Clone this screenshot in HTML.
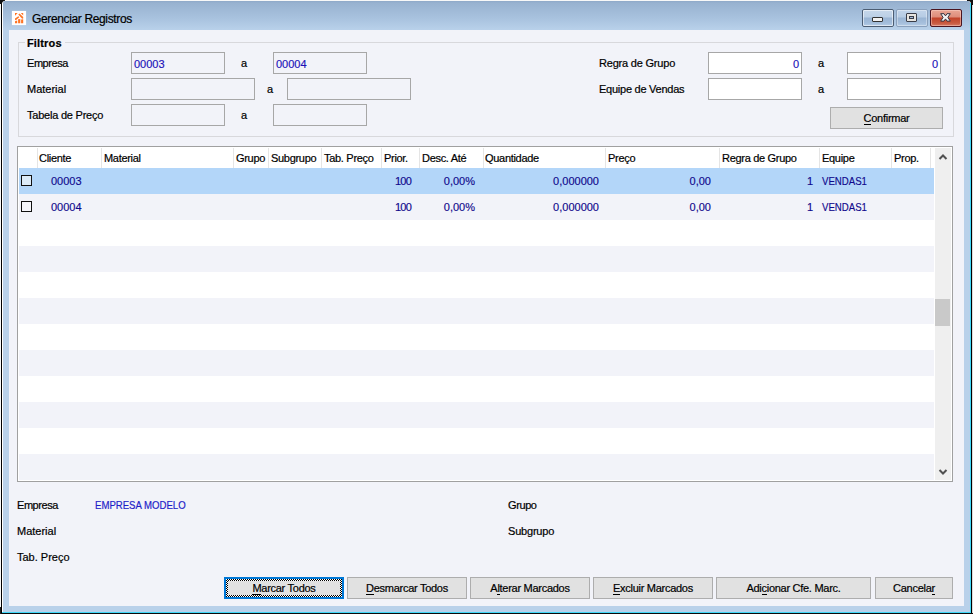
<!DOCTYPE html>
<html><head><meta charset="utf-8">
<style>
*{margin:0;padding:0;box-sizing:border-box}
html,body{width:973px;height:614px;overflow:hidden;background:#dfe6ee}
body{position:relative;font-family:"Liberation Sans",sans-serif;font-size:11px;color:#000;-webkit-text-stroke:0.2px currentColor}
.a{position:absolute}
.t{position:absolute;white-space:nowrap;line-height:13px;height:13px}
.frame{left:1px;top:0;width:971px;height:614px;background:#000;border-radius:6px 6px 0 0}
.frame2{left:2px;top:0;width:969px;height:613px;background:#fff;border-radius:5px 5px 0 0}
.frame3{left:3px;top:1px;width:967px;height:611px;background:linear-gradient(#8fa9c8 0px,#98b2d0 2px,#a9c3df 18px,#b9d1ea 29px,#b9d1ea 100%);border-radius:2px 2px 0 0}
.client{left:9px;top:30px;width:955px;height:576px;background:#f2f3f9}
.inp{position:absolute;border:1px solid #a7a7a7;background:#f2f3f9;height:22px}
.inpw{background:#fff}
.btn{position:absolute;border:1px solid #adadad;background:#e1e1e1;height:22px;text-align:center;line-height:21px;letter-spacing:-0.28px}
.blue{color:#10088c;-webkit-text-stroke:0.15px #10088c}
.blue2{color:#2010b8;-webkit-text-stroke:0.15px #2010b8}
u{text-decoration:none;border-bottom:1px solid #000}
</style></head><body>
<div class="a" style="left:0;top:0;width:973px;height:614px;background:#f8f8f8"></div>
<div class="a" style="left:972px;top:0;width:1px;height:614px;background:#dcdcdc"></div>
<div class="a" style="left:1px;top:0;width:1px;height:614px;background:#000"></div>
<div class="a" style="left:971px;top:0;width:1px;height:614px;background:#000"></div>
<div class="a" style="left:0;top:613px;width:973px;height:1px;background:#0a0a0a"></div>
<div class="a" style="left:0;top:607px;width:1px;height:7px;background:#222"></div>
<div class="a" style="left:0;top:0;width:5px;height:4px;background:#111;border-radius:0 0 4px 0"></div>
<div class="a" style="left:967px;top:0;width:6px;height:5px;background:#111;border-radius:0 0 0 4px"></div>
<div class="a" style="left:2px;top:1px;width:969px;height:612px;background:#fff;border-radius:3px 3px 0 0"></div>
<div class="a" style="left:970px;top:3px;width:1px;height:610px;background:#40d8f8"></div>
<div class="a" style="left:2px;top:612px;width:969px;height:1px;background:#40d8f8"></div>
<div class="a frame3"></div>
<!-- title icon -->
<div class="a" style="left:12px;top:11px;width:14px;height:14px;background:#fff;box-shadow:0 0 1px rgba(255,255,255,.6)"></div>
<svg class="a" style="left:12px;top:10px" width="14" height="16" viewBox="12 10 14 16">
<g fill="#ff7424">
<path d="M15 13H17.6L15 15.8Z"/>
<path d="M20.8 13H23.2V15.6Z"/>
<path d="M18.3 14.6L19.5 13.6L23.2 16.9V18.6L22.2 18.8Z"/>
<path d="M18.4 16.2L19.3 17.3L15.8 20.2L15 19.8V18.6Z"/>
<path d="M15 21.2L17.2 20.6V23.2H15Z"/>
<path d="M18.1 19.3L20.3 19V23.2H18.1Z"/>
<path d="M21.1 19.4L23.2 19.2V23.2H21.1Z"/>
</g></svg>
<div class="t" style="left:32px;top:12px;font-size:12px;line-height:14px;color:#000;letter-spacing:-0.36px">Gerenciar Registros</div>

<!-- caption buttons -->
<div class="a" style="left:862px;top:9px;width:32px;height:18px;border:1px solid #4c5d73;border-radius:2px;background:linear-gradient(#c6d7ea 0,#bcd0e6 7px,#9ab5d4 8px,#a3bddb 13px,#bcd2ea 17px)"></div>
<div class="a" style="left:863px;top:10px;width:30px;height:16px;border:1px solid rgba(255,255,255,.55);border-radius:1px"></div>
<div class="a" style="left:872px;top:17px;width:11px;height:5px;border:1px solid #333;border-radius:1px;background:#f2f2f2"></div>
<div class="a" style="left:896px;top:9px;width:32px;height:18px;border:1px solid #8aa0bc;border-radius:2px;background:linear-gradient(#c1d4ea 0,#b7cce4 7px,#9ab5d4 8px,#a6bfdc 13px,#b9d0e9 17px)"></div>
<div class="a" style="left:897px;top:10px;width:30px;height:16px;border:1px solid rgba(255,255,255,.35);border-radius:1px"></div>
<div class="a" style="left:906px;top:13px;width:11px;height:9px;border:1px solid #3a3d48;border-radius:1px;background:#e6e4e0"></div>
<div class="a" style="left:909px;top:16px;width:5px;height:3px;border:1px solid #3a3d48;background:#a3bcd9"></div>
<div class="a" style="left:930px;top:9px;width:32px;height:18px;border:1px solid #4a1520;border-radius:2px;background:linear-gradient(#e9a695 0,#de8d7b 7px,#c2432a 8px,#c85a40 13px,#d98370 17px)"></div>
<div class="a" style="left:931px;top:10px;width:30px;height:16px;border:1px solid rgba(255,220,210,.45);border-radius:2px"></div>
<svg class="a" style="left:938px;top:11px" width="15" height="13" viewBox="0 0 15 13">
<polygon points="2.7,2.7 6.0,2.7 7.5,4.9 9.0,2.7 12.3,2.7 9.9,6.4 12.3,10.1 9.0,10.1 7.5,7.9 6.0,10.1 2.7,10.1 5.1,6.4" fill="#f2f2f2" stroke="#363440" stroke-width="1" stroke-linejoin="round"/>
</svg>

<div class="a client"></div>

<!-- group box -->
<div class="a" style="left:18px;top:42px;width:936px;height:95px;border:1px solid #d8d8dc"></div>
<div class="a" style="left:25px;top:38px;width:40px;height:9px;background:#f2f3f9"></div>
<div class="t" style="left:27px;top:37px;font-weight:bold;letter-spacing:0.15px">Filtros</div>

<div class="t" style="left:27px;top:57px;letter-spacing:-0.45px">Empresa</div>
<div class="t" style="left:27px;top:83px">Material</div>
<div class="t" style="left:27px;top:109px;letter-spacing:-0.22px">Tabela de Preço</div>

<div class="inp" style="left:131px;top:52px;width:94px"></div>
<div class="t blue2" style="left:134px;top:58px">00003</div>
<div class="t" style="left:241px;top:57px">a</div>
<div class="inp" style="left:273px;top:52px;width:94px"></div>
<div class="t blue2" style="left:276px;top:58px">00004</div>

<div class="inp" style="left:131px;top:78px;width:124px"></div>
<div class="t" style="left:267px;top:83px">a</div>
<div class="inp" style="left:287px;top:78px;width:124px"></div>

<div class="inp" style="left:131px;top:104px;width:94px"></div>
<div class="t" style="left:241px;top:109px">a</div>
<div class="inp" style="left:273px;top:104px;width:94px"></div>

<div class="t" style="left:599px;top:57px;letter-spacing:-0.2px">Regra de Grupo</div>
<div class="t" style="left:599px;top:83px;letter-spacing:-0.25px">Equipe de Vendas</div>
<div class="inp inpw" style="left:708px;top:52px;width:94px"></div>
<div class="t blue2" style="left:759px;top:58px;width:40px;text-align:right">0</div>
<div class="t" style="left:818px;top:57px">a</div>
<div class="inp inpw" style="left:847px;top:52px;width:94px"></div>
<div class="t blue2" style="left:898px;top:58px;width:40px;text-align:right">0</div>
<div class="inp inpw" style="left:708px;top:78px;width:94px"></div>
<div class="t" style="left:818px;top:83px">a</div>
<div class="inp inpw" style="left:847px;top:78px;width:94px"></div>

<div class="btn" style="left:830px;top:107px;width:113px;line-height:19px"><span style="position:relative;top:1px"><u>C</u>onfirmar</span></div>

<!-- grid -->
<div class="a" id="grid" style="left:17px;top:146px;width:936px;height:336px;border:1px solid #a0a0a0;background:#fff;overflow:hidden">
<div class="a" style="left:19px;top:1px;width:1px;height:20px;background:#e5e5e5"></div>
<div class="a" style="left:83px;top:1px;width:1px;height:20px;background:#e5e5e5"></div>
<div class="a" style="left:215px;top:1px;width:1px;height:20px;background:#e5e5e5"></div>
<div class="a" style="left:250px;top:1px;width:1px;height:20px;background:#e5e5e5"></div>
<div class="a" style="left:303px;top:1px;width:1px;height:20px;background:#e5e5e5"></div>
<div class="a" style="left:363px;top:1px;width:1px;height:20px;background:#e5e5e5"></div>
<div class="a" style="left:401px;top:1px;width:1px;height:20px;background:#e5e5e5"></div>
<div class="a" style="left:465px;top:1px;width:1px;height:20px;background:#e5e5e5"></div>
<div class="a" style="left:587px;top:1px;width:1px;height:20px;background:#e5e5e5"></div>
<div class="a" style="left:701px;top:1px;width:1px;height:20px;background:#e5e5e5"></div>
<div class="a" style="left:801px;top:1px;width:1px;height:20px;background:#e5e5e5"></div>
<div class="a" style="left:873px;top:1px;width:1px;height:20px;background:#e5e5e5"></div>
<div class="a" style="left:912px;top:1px;width:1px;height:20px;background:#e5e5e5"></div>
<div class="t" style="left:21px;top:5px;letter-spacing:-0.3px">Cliente</div>
<div class="t" style="left:86px;top:5px;letter-spacing:-0.3px">Material</div>
<div class="t" style="left:218px;top:5px;letter-spacing:-0.3px">Grupo</div>
<div class="t" style="left:253px;top:5px;letter-spacing:-0.3px">Subgrupo</div>
<div class="t" style="left:306px;top:5px;letter-spacing:-0.3px">Tab. Preço</div>
<div class="t" style="left:366px;top:5px;letter-spacing:-0.3px">Prior.</div>
<div class="t" style="left:404px;top:5px;letter-spacing:-0.3px">Desc. Até</div>
<div class="t" style="left:467px;top:5px;letter-spacing:-0.3px">Quantidade</div>
<div class="t" style="left:590px;top:5px;letter-spacing:-0.3px">Preço</div>
<div class="t" style="left:704px;top:5px;letter-spacing:-0.3px">Regra de Grupo</div>
<div class="t" style="left:804px;top:5px;letter-spacing:-0.3px">Equipe</div>
<div class="t" style="left:876px;top:5px;letter-spacing:-0.3px">Prop.</div>
<div class="a" style="left:1px;top:21px;width:915px;height:26px;background:#b3d6f9"></div>
<div class="a" style="left:1px;top:47px;width:915px;height:26px;background:#f2f3f9"></div>
<div class="a" style="left:1px;top:99px;width:915px;height:26px;background:#f2f3f9"></div>
<div class="a" style="left:1px;top:151px;width:915px;height:26px;background:#f2f3f9"></div>
<div class="a" style="left:1px;top:203px;width:915px;height:26px;background:#f2f3f9"></div>
<div class="a" style="left:1px;top:255px;width:915px;height:26px;background:#f2f3f9"></div>
<div class="a" style="left:1px;top:307px;width:915px;height:26px;background:#f2f3f9"></div>
<div class="a" style="left:3px;top:28px;width:11px;height:11px;border:1px solid #111;background:#dcebf8"></div>
<div class="t blue" style="left:33px;top:28px">00003</div>
<div class="t blue" style="left:293px;top:28px;width:100px;text-align:right;letter-spacing:-0.8px">100</div>
<div class="t blue" style="left:357px;top:28px;width:100px;text-align:right">0,00%</div>
<div class="t blue" style="left:481px;top:28px;width:100px;text-align:right">0,000000</div>
<div class="t blue" style="left:593px;top:28px;width:100px;text-align:right">0,00</div>
<div class="t blue" style="left:695px;top:28px;width:100px;text-align:right">1</div>
<div class="t blue" style="left:804px;top:28px;transform:scaleX(0.875);transform-origin:0 0">VENDAS1</div>
<div class="a" style="left:3px;top:54px;width:11px;height:11px;border:1px solid #111;background:#f6f6fb"></div>
<div class="t blue" style="left:33px;top:54px">00004</div>
<div class="t blue" style="left:293px;top:54px;width:100px;text-align:right;letter-spacing:-0.8px">100</div>
<div class="t blue" style="left:357px;top:54px;width:100px;text-align:right">0,00%</div>
<div class="t blue" style="left:481px;top:54px;width:100px;text-align:right">0,000000</div>
<div class="t blue" style="left:593px;top:54px;width:100px;text-align:right">0,00</div>
<div class="t blue" style="left:695px;top:54px;width:100px;text-align:right">1</div>
<div class="t blue" style="left:804px;top:54px;transform:scaleX(0.875);transform-origin:0 0">VENDAS1</div>
<div class="a" style="left:917px;top:1px;width:16px;height:332px;background:#efefef"></div>
<div class="a" style="left:917px;top:152px;width:15px;height:27px;background:#c9c9c9"></div>
<svg class="a" style="left:920px;top:6px" width="10" height="8" viewBox="0 0 10 8"><path d="M1.5 6L5 2.5L8.5 6" fill="none" stroke="#505050" stroke-width="2"/></svg>
<svg class="a" style="left:920px;top:321px" width="10" height="8" viewBox="0 0 10 8"><path d="M1.5 2L5 5.5L8.5 2" fill="none" stroke="#505050" stroke-width="2"/></svg>
</div>

<!-- bottom labels -->
<div class="t" style="left:17px;top:499px;letter-spacing:-0.45px">Empresa</div>
<div class="t" style="left:95px;top:499px;color:#1e1ec8;-webkit-text-stroke:0.2px #1e1ec8;transform:scaleX(0.872);transform-origin:0 0">EMPRESA MODELO</div>
<div class="t" style="left:17px;top:525px">Material</div>
<div class="t" style="left:17px;top:551px">Tab. Preço</div>
<div class="t" style="left:508px;top:499px;letter-spacing:-0.4px">Grupo</div>
<div class="t" style="left:508px;top:525px;letter-spacing:-0.2px">Subgrupo</div>

<!-- buttons -->
<div class="btn" style="left:224px;top:577px;width:120px;border:2px solid #0078d7"></div>
<div class="a" style="left:226px;top:579px;width:116px;height:18px;background:repeating-conic-gradient(#000 0 25%,#fff 0 50%) 0 0/2px 2px"></div>
<div class="a" style="left:228px;top:581px;width:112px;height:14px;background:#e1e1e1"></div>
<div class="t" style="left:224px;top:582px;width:120px;text-align:center;line-height:13px;letter-spacing:-0.28px"><u>M</u>arcar Todos</div>
<div class="btn" style="left:347px;top:577px;width:120px"><u>D</u>esmarcar Todos</div>
<div class="btn" style="left:470px;top:577px;width:120px">A<u>l</u>terar Marcados</div>
<div class="btn" style="left:593px;top:577px;width:120px"><u>E</u>xcluir Marcados</div>
<div class="btn" style="left:716px;top:577px;width:155px">Adi<u>c</u>ionar Cfe. Marc.</div>
<div class="btn" style="left:875px;top:577px;width:78px">Cancela<u>r</u></div>
</body></html>
